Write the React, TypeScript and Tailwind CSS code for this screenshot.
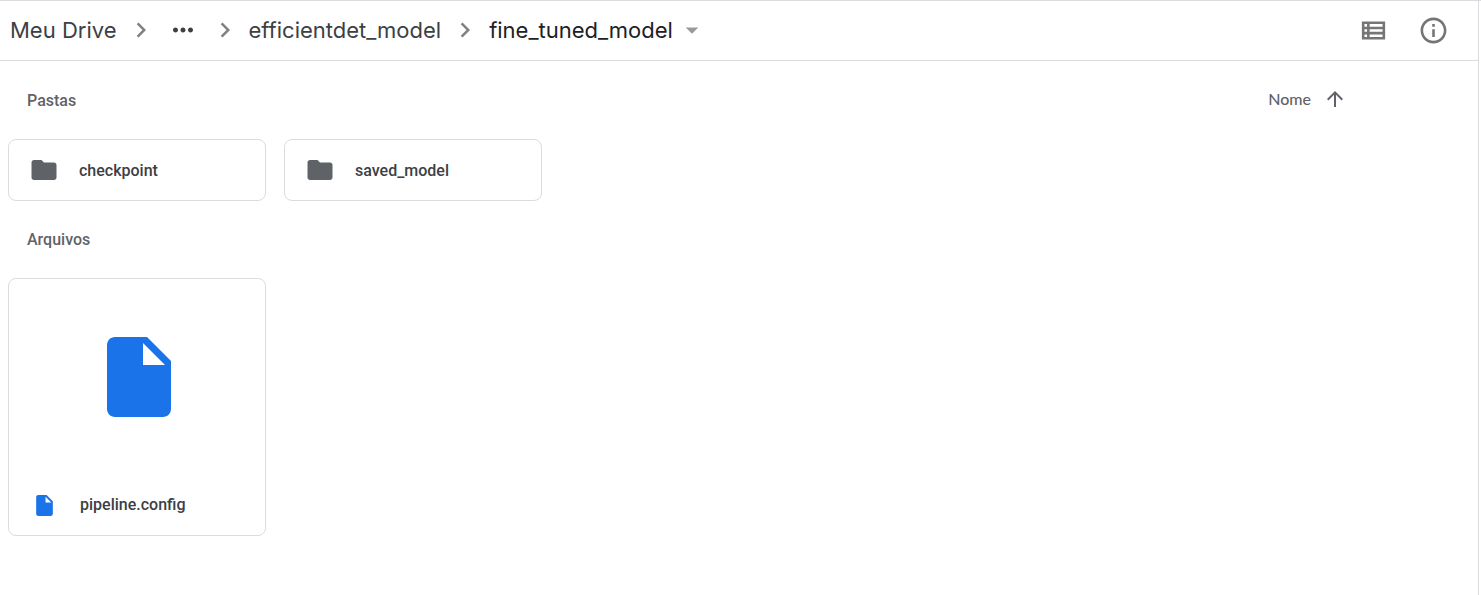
import type { ReactNode } from "react";

type IconProps = { d: string; className: string };

function Icon({ d, className }: IconProps) {
  return (
    <svg viewBox="0 0 24 24" fill="currentColor" aria-hidden="true" className={`shrink-0 ${className}`}>
      <path d={d} />
    </svg>
  );
}

const CHEVRON = "M10 6 8.59 7.41 13.17 12l-4.58 4.59L10 18l6-6z";
const MORE =
  "M6 10c-1.1 0-2 .9-2 2s.9 2 2 2 2-.9 2-2-.9-2-2-2zm12 0c-1.1 0-2 .9-2 2s.9 2 2 2 2-.9 2-2-.9-2-2-2zm-6 0c-1.1 0-2 .9-2 2s.9 2 2 2 2-.9 2-2-.9-2-2-2z";
const CARET = "M7 10l5 5 5-5z";
const LIST =
  "M3 5v14h18V5H3zm4 2v2H5V7h2zm-2 6v-2h2v2H5zm0 2h2v2H5v-2zm14 2H9v-2h10v2zm0-4H9v-2h10v2zm0-4H9V7h10v2z";
const INFO =
  "M11 7h2v2h-2V7zm0 4h2v6h-2v-6zm1-9C6.48 2 2 6.48 2 12s4.48 10 10 10 10-4.48 10-10S17.52 2 12 2zm0 18c-4.41 0-8-3.59-8-8s3.59-8 8-8 8 3.59 8 8-3.59 8-8 8z";
const ARROW_UP = "M4 12l1.41 1.41L11 7.83V20h2V7.83l5.58 5.59L20 12l-8-8-8 8z";
const FOLDER = "M10 4H4c-1.1 0-1.99.9-1.99 2L2 18c0 1.1.9 2 2 2h16c1.1 0 2-.9 2-2V8c0-1.1-.9-2-2-2h-8l-2-2z";
const FILE =
  "M6 2c-1.1 0-2 .9-2 2v16c0 1.1.9 2 2 2h12c1.1 0 2-.9 2-2V8l-6-6H6zm7 7V3.5L18.5 9H13z";

function Separator() {
  return <Icon d={CHEVRON} className="mx-[9px] size-[30px] text-[#808080]" />;
}

function SectionTitle({ children }: { children: ReactNode }) {
  return <h2 className="text-base font-medium text-[#5f6368]">{children}</h2>;
}

function FolderCard({ name }: { name: string }) {
  return (
    <button
      type="button"
      className="flex h-[62px] w-[258px] items-center gap-5 rounded-lg border border-[#dadce0] px-5 text-left"
    >
      <Icon d={FOLDER} className="size-[30px] text-[#5f6368]" />
      <span className="pt-px font-medium text-[#3c4043]">{name}</span>
    </button>
  );
}

function FileCard({ name }: { name: string }) {
  return (
    <button
      type="button"
      className="flex h-[258px] w-[258px] flex-col rounded-lg border border-[#dadce0] text-left text-[#1a73e8]"
    >
      <span className="flex w-full flex-1 items-center justify-center pl-1">
        <Icon d={FILE} className="size-24" />
      </span>
      <span className="flex h-[60px] w-full items-center gap-5 px-5">
        <span className="flex w-[31px] justify-center">
          <Icon d={FILE} className="size-[25px]" />
        </span>
        <span className="font-medium text-[#3c4043]">{name}</span>
      </span>
    </button>
  );
}

export default function App() {
  return (
    <div className="flex min-h-screen flex-col border-t border-[#dadce0] bg-white pr-0.5 font-['Roboto',sans-serif] text-base">
      <div className="flex-1 border-r border-[#dadce0]">
        <header className="flex h-[60px] items-center justify-between border-b border-[#dadce0] pr-[29px] pb-px pl-2.5">
          <nav aria-label="Pastas" className="flex items-center font-['Inter',sans-serif] text-[22px] leading-8 text-[#3c4043]">
            <a href="#drive">Meu Drive</a>
            <Separator />
            <button type="button" aria-label="Mais pastas">
              <Icon d={MORE} className="mx-[3px] size-[30px]" />
            </button>
            <Separator />
            <a href="#efficientdet">efficientdet_model</a>
            <Separator />
            <button type="button" className="flex items-center gap-1 text-[#202124]">
              fine_tuned_model
              <Icon d={CARET} className="size-[30px] text-[#999999]" />
            </button>
          </nav>
          <div className="flex items-center gap-[29px] text-[#757575]">
            <button type="button" aria-label="Visualização em lista">
              <Icon d={LIST} className="size-[31px]" />
            </button>
            <button type="button" aria-label="Ver detalhes">
              <Icon d={INFO} className="size-[31px]" />
            </button>
          </div>
        </header>

        <main className="pl-2">
          <section>
            <div className="flex h-[78px] items-center justify-between pr-[131px] pl-[19px]">
              <div className="pt-px">
                <SectionTitle>Pastas</SectionTitle>
              </div>
              <button type="button" className="flex items-center gap-3 pb-0.5 font-['Lato',sans-serif] font-medium text-[#5f6368]">
                Nome
                <Icon d={ARROW_UP} className="size-6" />
              </button>
            </div>
            <div className="flex flex-wrap gap-[18px]">
              <FolderCard name="checkpoint" />
              <FolderCard name="saved_model" />
            </div>
          </section>
          <section>
            <div className="flex h-[77px] items-center pl-[19px]">
              <SectionTitle>Arquivos</SectionTitle>
            </div>
            <FileCard name="pipeline.config" />
          </section>
        </main>
      </div>
    </div>
  );
}
